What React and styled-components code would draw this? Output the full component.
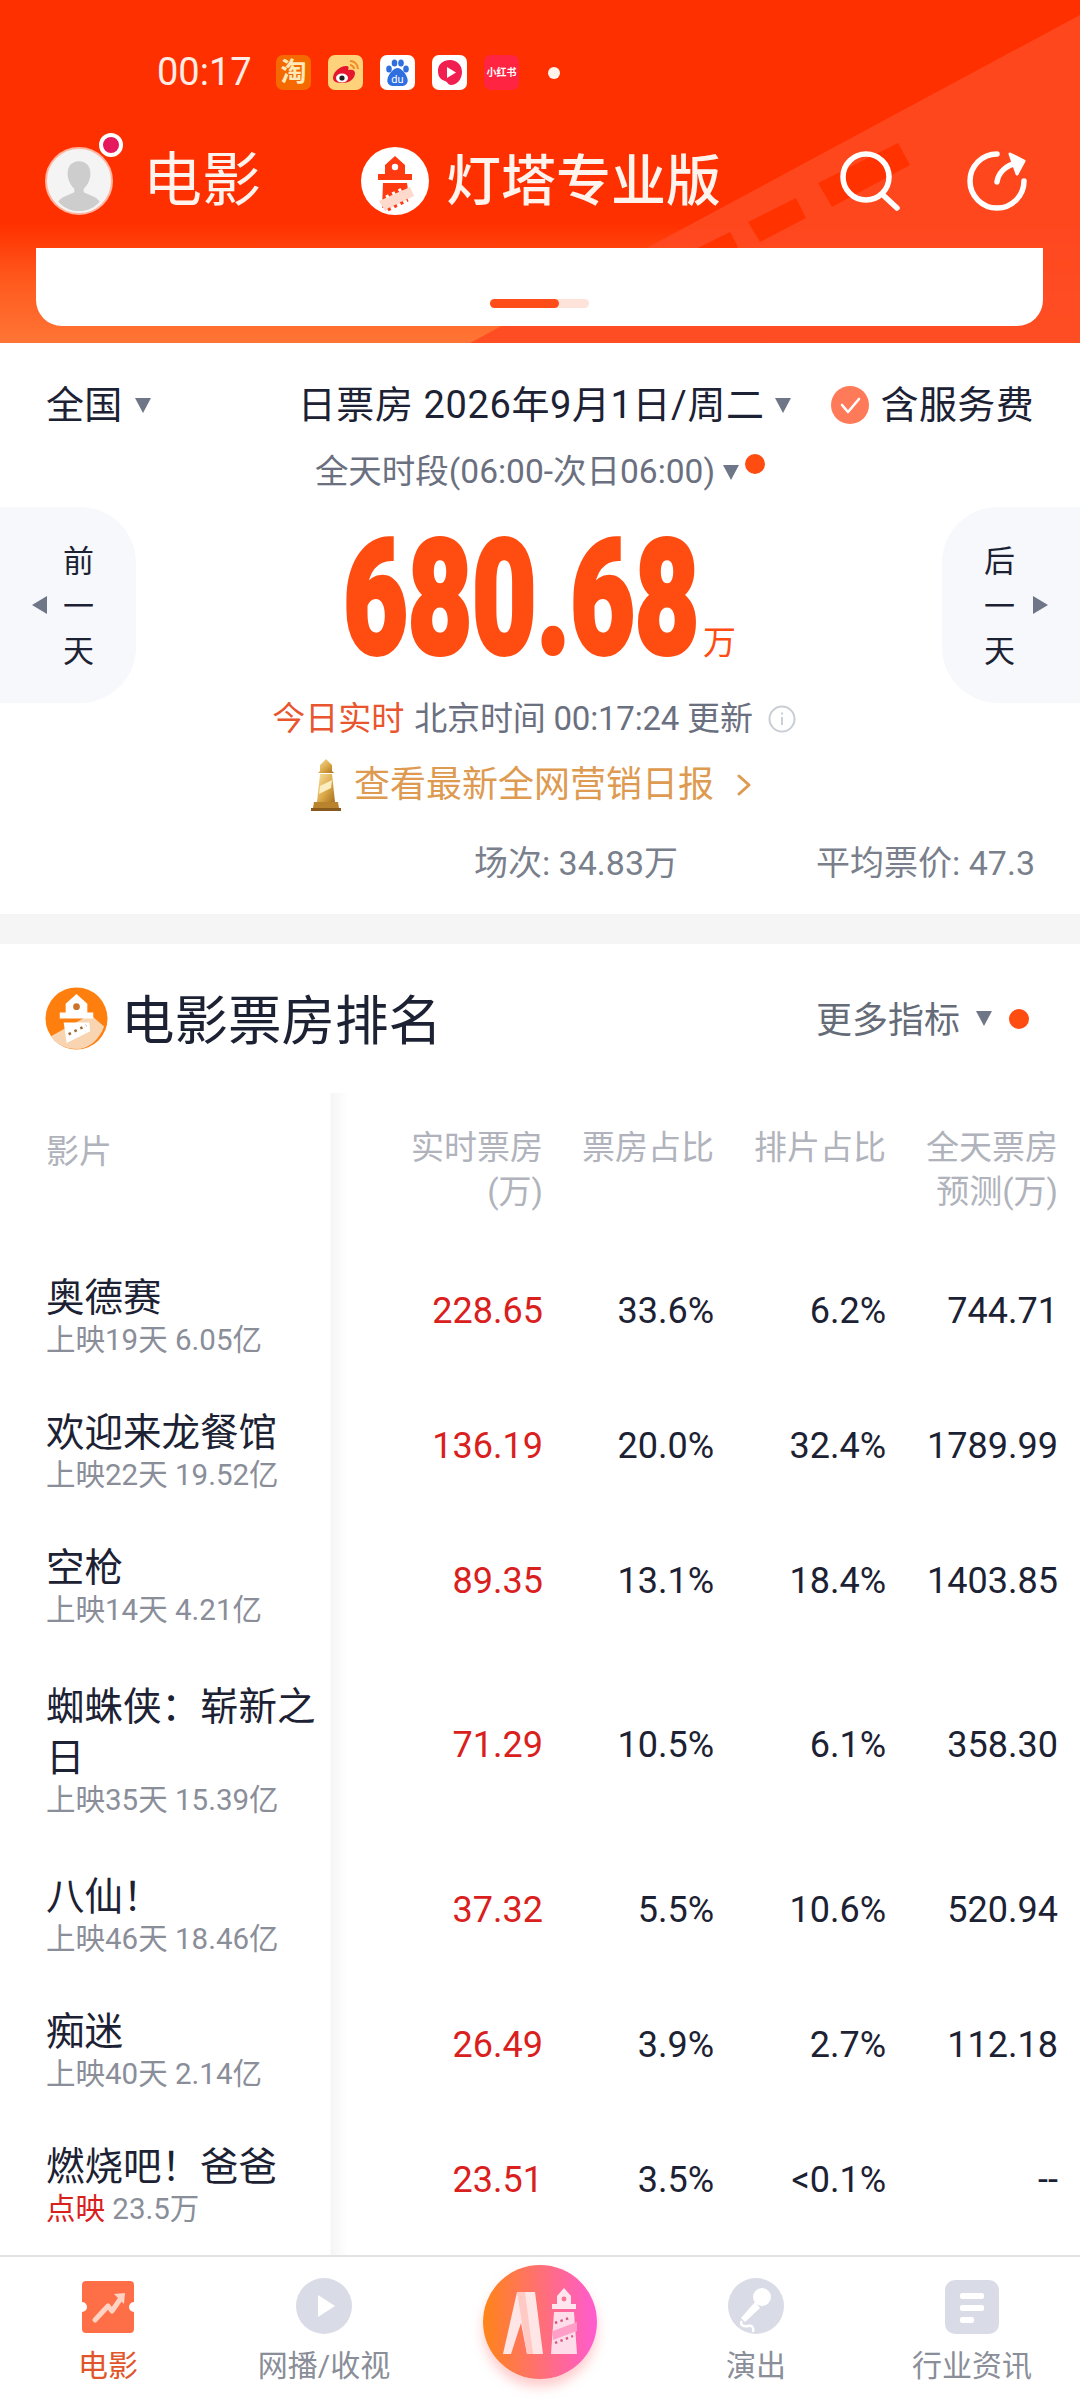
import styled, { createGlobalStyle } from "styled-components";

const FONT = `Roboto, "Noto Sans CJK SC", sans-serif`;

const GlobalStyle = createGlobalStyle`
  html, body {
    margin: 0;
    padding: 0;
    background: #fff;
  }
  body {
    font-family: ${FONT};
    color: #1c2233;
  }
`;

const movies = [
  { name: "奥德赛", sub: "上映19天 6.05亿", values: ["228.65", "33.6%", "6.2%", "744.71"] },
  { name: "欢迎来龙餐馆", sub: "上映22天 19.52亿", values: ["136.19", "20.0%", "32.4%", "1789.99"] },
  { name: "空枪", sub: "上映14天 4.21亿", values: ["89.35", "13.1%", "18.4%", "1403.85"] },
  { name: "蜘蛛侠\uFF1A崭新之日", tall: true, sub: "上映35天 15.39亿", values: ["71.29", "10.5%", "6.1%", "358.30"] },
  { name: "八仙\uFF01", sub: "上映46天 18.46亿", values: ["37.32", "5.5%", "10.6%", "520.94"] },
  { name: "痴迷", sub: "上映40天 2.14亿", values: ["26.49", "3.9%", "2.7%", "112.18"] },
  { name: "燃烧吧\uFF01爸爸", hot: "点映", sub: "23.5万", values: ["23.51", "3.5%", "<0.1%", "--"] },
];

const App = () => {
  return (
    <Page lang="zh-CN">
      <GlobalStyle />
      <Header>
        <HeaderDecor viewBox="0 0 1080 343" aria-hidden="true">
          <polygon points="1080,15 1080,343 470,343" fill="#ff4a22" />
          <polygon points="818,183 898,143 910,165 832,207" fill="#ff3300" />
          <polygon points="748,222 796,198 806,218 760,242" fill="#ff3300" />
          <polygon points="690,252 730,232 738,247 700,268" fill="#ff3300" />
        </HeaderDecor>
        <StatusBar>
          <StatusTime>00:17</StatusTime>
          <AppIcons>
            <TaoIcon>淘</TaoIcon>
            <AppIcon $bg="#fdd27a">
              <svg viewBox="0 0 35 35" width="35" height="35">
                <path d="M5 23c0-6 7-12 13-12 3 0 3 2 2 4 4-1 7 0 7 3 0 6-6 10-12 10S5 27 5 23z" fill="#e6162d" />
                <ellipse cx="14" cy="23" rx="6" ry="4.5" fill="#fff" />
                <circle cx="14" cy="23" r="2.6" fill="#222" />
                <path d="M22 6c4 0 8 3 8 8M22 10c2 0 4 2 4 4" stroke="#f08a24" strokeWidth="2" fill="none" />
              </svg>
            </AppIcon>
            <AppIcon $bg="#fff">
              <svg viewBox="0 0 35 35" width="35" height="35">
                <ellipse cx="9" cy="14" rx="2.8" ry="3.6" fill="#2f6fe0" />
                <ellipse cx="14.5" cy="8" rx="2.8" ry="3.6" fill="#2f6fe0" />
                <ellipse cx="21" cy="8" rx="2.8" ry="3.6" fill="#2f6fe0" />
                <ellipse cx="26" cy="14" rx="2.8" ry="3.6" fill="#2f6fe0" />
                <path d="M17.5 13c-4 0-9 6-10 11-1 4 2 7 5 7h10c3 0 6-3 5-7-1-5-6-11-10-11z" fill="#2f6fe0" />
                <text x="17.5" y="28" fontSize="11" fill="#fff" textAnchor="middle" fontFamily="Roboto">du</text>
              </svg>
            </AppIcon>
            <AppIcon $bg="#fff">
              <svg viewBox="0 0 35 35" width="35" height="35">
                <path d="M6 16C6 9 11 5 18 5s12 5 12 12-5 13-11 13c-3 0-3-3-6-4-3-1-7-3-7-10z" fill="#f01f4f" />
                <path d="M15 12l9 5.5-9 5.5z" fill="#fff" />
              </svg>
            </AppIcon>
            <RedNoteIcon>小红书</RedNoteIcon>
            <StatusDot />
          </AppIcons>
        </StatusBar>

        <NavBar>
          <NavLeft>
            <Avatar>
              <svg viewBox="0 0 68 68" width="64" height="64">
                <path d="M34 13c9 0 13 7 12 16-1 6-4 11-7 13v4c6 3 14 5 17 10-5 6-13 10-22 10s-17-4-22-10c3-5 11-7 17-10v-4c-3-2-6-7-7-13-1-9 3-16 12-16z" fill="#cdcdcd" />
              </svg>
              <AvatarBadge />
            </Avatar>
            <NavTitle>电影</NavTitle>
          </NavLeft>
          <NavBrand>
            <svg viewBox="0 0 70 70" width="70" height="70">
              <circle cx="35" cy="35" r="34" fill="#fff" />
              <path d="M35 10l10 9v9h7v6H18v-6h7v-9z" fill="#ff3a10" />
              <circle cx="35" cy="21" r="3.2" fill="#fff" />
              <path d="M23 37h24l2 14-27 11z" fill="#ff3a10" />
              <path d="M19 55l31-14 4 9-29 15z" fill="#ffd9cc" />
              <path d="M26 51l16-8" stroke="#fff" strokeWidth="3" strokeDasharray="3 4" />
              <path d="M28 64l20-10" stroke="#ff3a10" strokeWidth="3" strokeDasharray="3 4" />
            </svg>
            <BrandName>灯塔专业版</BrandName>
          </NavBrand>
          <NavActions>
            <svg viewBox="0 0 62 62" width="62" height="62" fill="none" stroke="#fff" strokeWidth="5.5" strokeLinecap="round">
              <circle cx="27" cy="27" r="23" />
              <path d="M44 45l14 13" />
            </svg>
            <svg viewBox="0 0 62 62" width="62" height="62" fill="none" stroke="#fff" strokeWidth="5.5" strokeLinecap="round" strokeLinejoin="round">
              <path d="M31 4A27 27 0 1 0 58 31" />
              <path d="M31 32c1-9 9-17 20-19" />
              <path d="M44 4l14 7-7 13z" fill="#fff" strokeWidth="3" />
            </svg>
          </NavActions>
        </NavBar>

        <BannerCard>
          <BannerPager>
            <BannerPagerFill />
          </BannerPager>
        </BannerCard>
      </Header>

      <Summary>
        <FilterRow>
          <FilterGroup>
            <FilterText>全国</FilterText>
            <Caret />
          </FilterGroup>
          <DateGroup>
            <DateText>日票房 2026年9月1日/周二</DateText>
            <Caret />
          </DateGroup>
          <FeeGroup>
            <CheckCircle>
              <svg viewBox="0 0 38 38" width="38" height="38" fill="none" stroke="#fff" strokeWidth="2.6" strokeLinecap="round" strokeLinejoin="round">
                <path d="M11 19l6 7 11-13" />
              </svg>
            </CheckCircle>
            <FilterText>含服务费</FilterText>
          </FeeGroup>
        </FilterRow>

        <PeriodRow>
          <PeriodText>全天时段(06:00-次日06:00)</PeriodText>
          <Caret />
          <PeriodDot />
        </PeriodRow>

        <HeroRow>
          <DayPanel $side="left">
            <SmallArrow $dir="left" />
            <DayChars>
              <span>前</span>
              <span>一</span>
              <span>天</span>
            </DayChars>
          </DayPanel>
          <HeroCenter>
            <BigBox>
              <BigNumber>680.68</BigNumber>
            </BigBox>
            <BigUnit>万</BigUnit>
          </HeroCenter>
          <DayPanel $side="right">
            <DayChars>
              <span>后</span>
              <span>一</span>
              <span>天</span>
            </DayChars>
            <SmallArrow $dir="right" />
          </DayPanel>
        </HeroRow>

        <RealtimeRow>
          <RealtimeTag>今日实时</RealtimeTag>
          <RealtimeText>北京时间 00:17:24 更新</RealtimeText>
          <InfoIcon>
            <svg viewBox="0 0 28 28" width="28" height="28" fill="none" stroke="#c9cdd4" strokeWidth="2">
              <circle cx="14" cy="14" r="12.5" />
              <path d="M14 12v8" />
              <path d="M14 7.5v2" />
            </svg>
          </InfoIcon>
        </RealtimeRow>

        <ReportRow>
          <svg viewBox="0 0 30 52" width="30" height="52">
            <defs>
              <linearGradient id="gold" x1="0" y1="0" x2="1" y2="1">
                <stop offset="0" stopColor="#f8e2a0" />
                <stop offset="0.55" stopColor="#dba94a" />
                <stop offset="1" stopColor="#a8701f" />
              </linearGradient>
            </defs>
            <path d="M15 0l6 6v6l2 2H7l2-2V6z" fill="url(#gold)" />
            <path d="M9 15h12l3 28H6z" fill="url(#gold)" />
            <path d="M9 27l12-6-1 8-12 6z" fill="#fbedc0" />
            <path d="M3 43h24l1 6H2z" fill="#b9822d" />
            <path d="M0 49h30v3H0z" fill="#8a5a1c" />
          </svg>
          <ReportText>查看最新全网营销日报</ReportText>
          <svg viewBox="0 0 14 22" width="14" height="22" fill="none" stroke="#dd9a50" strokeWidth="3" strokeLinecap="round" strokeLinejoin="round">
            <path d="M2 2l10 9-10 9" />
          </svg>
        </ReportRow>

        <StatsRow>
          <StatText>场次: 34.83万</StatText>
          <StatText>平均票价: 47.3</StatText>
        </StatsRow>
      </Summary>

      <GrayBand />

      <Ranking>
        <RankingHead>
          <RankingTitle>
            <svg viewBox="0 0 64 64" width="63" height="63">
              <circle cx="32" cy="32" r="31.5" fill="#ff7f0e" />
              <path d="M6 50l40-22 14 12C55 54 44 63 32 63 21 63 11 58 6 50z" fill="#f8d4b0" />
              <path d="M32 7l11 10v9h6v6H15v-6h6v-9z" fill="#fff" />
              <circle cx="32" cy="20" r="3.4" fill="#c9742a" />
              <path d="M19 36h26l1 9-24 12z" fill="#fff" />
              <path d="M24 48l18-9" stroke="#a06a30" strokeWidth="2.6" strokeDasharray="2.6 4" />
            </svg>
            <RankingName>电影票房排名</RankingName>
          </RankingTitle>
          <MoreMetrics>
            <MoreText>更多指标</MoreText>
            <Caret />
            <MoreDot />
          </MoreMetrics>
        </RankingHead>

        <Table>
          <TableHeadRow>
            <NameCell>
              <HeadName>影片</HeadName>
            </NameCell>
            <HeadCell>实时票房<br />(万)</HeadCell>
            <HeadCell>票房占比</HeadCell>
            <HeadCell>排片占比</HeadCell>
            <HeadCell>全天票房<br />预测(万)</HeadCell>
          </TableHeadRow>
          {movies.map((movie) => (
            <MovieRow key={movie.name} $tall={movie.tall}>
              <MovieNameCell>
                <MovieName>{movie.name}</MovieName>
                <MovieSub>
                  {movie.hot && <HotTag>{movie.hot} </HotTag>}
                  {movie.sub}
                </MovieSub>
              </MovieNameCell>
              {movie.values.map((value, i) => (
                <ValueCell key={i} $primary={i === 0}>{value}</ValueCell>
              ))}
            </MovieRow>
          ))}
          <TableTail>
            <NameCell />
          </TableTail>
        </Table>
      </Ranking>

      <TabBar>
        <Tab>
          <TabIcon>
            <svg viewBox="0 0 54 54" width="54" height="54">
              <path d="M5 1h44a4 4 0 0 1 4 4v17a5 5 0 0 0 0 10v17a4 4 0 0 1-4 4H5a4 4 0 0 1-4-4V32a5 5 0 0 0 0-10V5a4 4 0 0 1 4-4z" fill="#ff6f47" />
              <path d="M14 40l13-14 4 5 9-13" stroke="#ffd3c4" strokeWidth="5" fill="none" strokeLinecap="round" strokeLinejoin="round" />
              <path d="M33 14l11-1-1 11z" fill="#ffd3c4" />
            </svg>
          </TabIcon>
          <TabLabel $active>电影</TabLabel>
        </Tab>
        <Tab>
          <TabIcon>
            <svg viewBox="0 0 56 56" width="56" height="56">
              <circle cx="28" cy="28" r="28" fill="#d9dce6" />
              <path d="M22 17l17 11-17 11z" fill="#fff" strokeLinejoin="round" />
            </svg>
          </TabIcon>
          <TabLabel>网播/收视</TabLabel>
        </Tab>
        <Tab>
          <AiButton>
            <svg viewBox="0 0 114 114" width="114" height="114">
              <polygon points="34,27 52,27 60,89 44,89 38,58 28,89 20,89" fill="#ffe6e6" />
              <polygon points="34,27 42,27 50,89 44,89" fill="#ffc9c4" />
              <path d="M81 23l7 8v8h5v5H69v-5h5v-8z" fill="#ffe6ee" />
              <circle cx="81" cy="34" r="2.4" fill="#ff6f8f" />
              <path d="M71 47h20l3 42H68z" fill="#ffdcea" />
              <path d="M70 66l24-9v9l-24 9z" fill="#ff9fc8" />
              <path d="M72 58l14-5M72 78l18-7" stroke="#d9577f" strokeWidth="2.4" strokeDasharray="2.4 3.4" />
            </svg>
          </AiButton>
        </Tab>
        <Tab>
          <TabIcon>
            <svg viewBox="0 0 56 56" width="56" height="56">
              <circle cx="28" cy="28" r="28" fill="#d9dce6" />
              <circle cx="34" cy="19" r="9" fill="#fff" />
              <path d="M27 24l5 6-15 14-4-4z" fill="#fff" />
              <path d="M14 43c-3 4 2 6 6 5s6 1 5 6" stroke="#fff" strokeWidth="2.4" fill="none" />
            </svg>
          </TabIcon>
          <TabLabel>演出</TabLabel>
        </Tab>
        <Tab>
          <TabIcon>
            <svg viewBox="0 0 54 54" width="54" height="54">
              <rect width="54" height="54" rx="10" fill="#d9dce6" />
              <rect x="15" y="13" width="24" height="6" rx="2" fill="#fff" />
              <rect x="15" y="25" width="24" height="6" rx="2" fill="#fff" />
              <rect x="15" y="37" width="14" height="6" rx="2" fill="#fff" />
            </svg>
          </TabIcon>
          <TabLabel>行业资讯</TabLabel>
        </Tab>
      </TabBar>
    </Page>
  );
};
export default App;

const Page = styled.div`
  width: 1080px;
  height: 2400px;
  overflow: hidden;
  background: #fff;
  display: flex;
  flex-direction: column;
`;

/* top red area */
const Header = styled.header`
  position: relative;
  height: 343px;
  flex-shrink: 0;
  overflow: hidden;
  background: linear-gradient(180deg, #ff3000 0%, #ff3000 65%, #ff5a1e 82%, #ff7535 100%);
`;
const HeaderDecor = styled.svg`
  position: absolute;
  inset: 0;
  width: 1080px;
  height: 343px;
  opacity: 0.9;
`;
const StatusBar = styled.div`
  position: relative;
  display: flex;
  align-items: center;
  height: 35px;
  padding: 55px 0 0 157px;
`;
const StatusTime = styled.span`
  width: 119px;
  font-size: 38px;
  line-height: 35px;
  color: #ffece4;
`;
const AppIcons = styled.div`
  display: flex;
  align-items: center;
  gap: 17px;
`;
const AppIcon = styled.span`
  display: flex;
  width: 35px;
  height: 35px;
  border-radius: 7px;
  overflow: hidden;
  background: ${(props) => props.$bg};
`;
const TaoIcon = styled.span`
  display: flex;
  align-items: center;
  justify-content: center;
  width: 35px;
  height: 35px;
  border-radius: 7px;
  background: #f56a00;
  color: #ffe9b8;
  font-size: 26px;
  font-weight: 700;
  line-height: 35px;
`;
const RedNoteIcon = styled.span`
  display: flex;
  align-items: center;
  justify-content: center;
  width: 35px;
  height: 35px;
  border-radius: 7px;
  background: #ff2442;
  color: #fff;
  font-size: 10px;
  font-weight: 700;
  white-space: nowrap;
  line-height: 35px;
`;
const StatusDot = styled.span`
  width: 12px;
  height: 12px;
  margin-left: 12px;
  border-radius: 50%;
  background: #fff3ee;
`;
const NavBar = styled.div`
  position: relative;
  display: flex;
  align-items: center;
  height: 70px;
  margin-top: 56px;
  padding: 0 52px 0 45px;
`;
const NavLeft = styled.div`
  display: flex;
  align-items: center;
  gap: 30px;
  width: 315px;
`;
const Avatar = styled.div`
  position: relative;
  display: flex;
  align-items: center;
  justify-content: center;
  width: 64px;
  height: 64px;
  border: 2px solid #ffb59f;
  border-radius: 50%;
  background: #f4f4f4;
  svg {
    border-radius: 50%;
  }
`;
const AvatarBadge = styled.span`
  position: absolute;
  top: -16px;
  right: -12px;
  width: 16px;
  height: 16px;
  border: 4px solid #fff;
  border-radius: 50%;
  background: #e6195f;
`;
const NavTitle = styled.div`
  font-size: 59px;
  line-height: 70px;
  color: #fff3ee;
`;
const NavBrand = styled.div`
  display: flex;
  align-items: center;
  gap: 16px;
`;
const BrandName = styled.div`
  font-size: 55px;
  line-height: 70px;
  font-weight: 500;
  color: #fff3ee;
`;
const NavActions = styled.div`
  display: flex;
  align-items: center;
  gap: 68px;
  margin-left: auto;
  svg:first-child {
    margin-right: -3px;
  }
`;
const BannerCard = styled.div`
  position: relative;
  display: flex;
  justify-content: center;
  box-sizing: border-box;
  height: 78px;
  margin: 32px 37px 0 36px;
  padding-top: 51px;
  background: #fff;
  border-radius: 0 0 26px 26px;
`;
const BannerPager = styled.div`
  width: 99px;
  height: 9px;
  border-radius: 5px;
  background: #fde3da;
`;
const BannerPagerFill = styled.div`
  width: 69px;
  height: 9px;
  border-radius: 5px;
  background: #ff4d1a;
`;

/* summary */
const Summary = styled.section`
  flex-shrink: 0;
  padding: 31px 0;
  background: #fff;
`;
const FilterRow = styled.div`
  display: flex;
  align-items: center;
  height: 60px;
  padding: 2px 46px 0;
  box-sizing: border-box;
`;
const FilterGroup = styled.div`
  display: flex;
  align-items: center;
  gap: 12px;
`;
const DateGroup = styled(FilterGroup)`
  margin-left: auto;
  gap: 10px;
`;
const FeeGroup = styled(FilterGroup)`
  margin-left: 40px;
`;
const FilterText = styled.span`
  font-size: 38px;
  line-height: 58px;
  letter-spacing: 0.35px;
  color: #1c2233;
  white-space: nowrap;
`;
const DateText = styled(FilterText)`
  letter-spacing: 0.6px;
`;
const Caret = styled.span`
  width: 0;
  height: 0;
  border-left: 8px solid transparent;
  border-right: 8px solid transparent;
  border-top: 15px solid #6f7687;
`;
const CheckCircle = styled.span`
  display: flex;
  width: 38px;
  height: 38px;
  border-radius: 50%;
  background: #ff7a59;
`;
const PeriodRow = styled.div`
  position: relative;
  display: flex;
  align-items: center;
  justify-content: center;
  gap: 8px;
  height: 40px;
  margin-top: 18px;
`;
const PeriodText = styled.span`
  font-size: 33.5px;
  line-height: 40px;
  color: #6b7080;
`;
const PeriodDot = styled.span`
  width: 20px;
  height: 20px;
  margin: -16px 0 0 -2px;
  border-radius: 50%;
  background: #ff4d12;
`;
const HeroRow = styled.div`
  display: flex;
  align-items: center;
  justify-content: space-between;
  height: 196px;
  margin-top: 15px;
`;
const DayPanel = styled.div`
  display: flex;
  align-items: center;
  justify-content: center;
  gap: ${(props) => (props.$side === "left" ? "16px" : "18px")};
  box-sizing: border-box;
  width: ${(props) => (props.$side === "left" ? "136px" : "138px")};
  height: 196px;
  padding: ${(props) => (props.$side === "left" ? "0 10px 0 0" : "0 0 0 10px")};
  background: #f6f8fb;
  border-radius: ${(props) => (props.$side === "left" ? "0 56px 56px 0" : "56px 0 0 56px")};
`;
const SmallArrow = styled.span`
  width: 0;
  height: 0;
  border-top: 9px solid transparent;
  border-bottom: 9px solid transparent;
  ${(props) =>
    props.$dir === "left"
      ? "border-right: 15px solid #6f7687;"
      : "border-left: 15px solid #6f7687;"}
`;
const DayChars = styled.div`
  display: flex;
  flex-direction: column;
  align-items: center;
  padding-top: 3px;
  font-size: 31px;
  line-height: 45px;
  color: #1c2233;
`;
const HeroCenter = styled.div`
  display: flex;
  align-items: flex-end;
  gap: 4px;
  height: 121px;
  margin: 0 0 14px 8px;
`;
const BigBox = styled.div`
  display: flex;
  justify-content: flex-end;
  width: 349px;
  height: 120px;
`;
const BigNumber = styled.div`
  flex-shrink: 0;
  font-size: 160px;
  line-height: 120px;
  font-weight: 900;
  color: #ff4d12;
  -webkit-text-stroke: 4px #ff4d12;
  transform: scaleX(0.695);
  transform-origin: right center;
`;
const BigUnit = styled.span`
  margin-bottom: -2px;
  font-size: 33px;
  line-height: 36px;
  color: #ff4d12;
`;
const RealtimeRow = styled.div`
  display: flex;
  align-items: center;
  justify-content: center;
  gap: 10px;
  height: 34px;
  padding-right: 12px;
  margin-top: -1px;
`;
const RealtimeTag = styled.span`
  font-size: 33px;
  line-height: 34px;
  color: #e8552e;
`;
const RealtimeText = styled.span`
  font-size: 33px;
  line-height: 34px;
  letter-spacing: -0.2px;
  color: #6b7080;
`;
const InfoIcon = styled.span`
  display: flex;
  margin-left: 5px;
`;
const ReportRow = styled.div`
  display: flex;
  align-items: center;
  justify-content: center;
  height: 52px;
  margin-top: 23px;
  padding-right: 18px;
  svg:last-child {
    margin-left: 23px;
  }
`;
const ReportText = styled.span`
  margin-left: 13px;
  font-size: 36px;
  line-height: 52px;
  color: #dd9a50;
`;
const StatsRow = styled.div`
  display: flex;
  justify-content: flex-end;
  gap: 138px;
  height: 40px;
  margin-top: 32px;
  padding-right: 45px;
`;
const StatText = styled.span`
  font-size: 34px;
  line-height: 40px;
  color: #7a7f8c;
`;
const GrayBand = styled.div`
  flex-shrink: 0;
  height: 30px;
  background: #f5f5f5;
`;

/* ranking table */
const Ranking = styled.section`
  flex: 1;
  min-height: 0;
  padding-top: 43px;
`;
const RankingHead = styled.div`
  display: flex;
  align-items: center;
  justify-content: space-between;
  height: 63px;
  padding: 0 51px 0 45px;
`;
const RankingTitle = styled.div`
  display: flex;
  align-items: center;
  gap: 13px;
`;
const RankingName = styled.h2`
  margin: 0;
  padding-top: 6px;
  font-size: 53.5px;
  line-height: 57px;
  font-weight: 400;
  color: #1c2233;
`;
const MoreMetrics = styled.div`
  display: flex;
  align-items: center;
  gap: 16px;
`;
const MoreText = styled.span`
  padding-top: 5px;
  font-size: 36px;
  line-height: 58px;
  color: #666b78;
`;
const MoreDot = styled.span`
  width: 20px;
  height: 20px;
  margin-left: 1px;
  border-radius: 50%;
  background: #ff4d12;
`;
const Table = styled.div`
  margin-top: 43px;
`;
const COLUMNS = "349px 194px 171px 172px 172px";
const TableHeadRow = styled.div`
  display: grid;
  grid-template-columns: ${COLUMNS};
  height: 150px;
`;
const NameCell = styled.div`
  box-sizing: border-box;
  height: 100%;
  display: flex;
  flex-direction: column;
  justify-content: center;
  padding: 0 20px 0 46px;
  background: linear-gradient(90deg, #fff 0, #f5f5f5 1px, #fff) 330px 0 / 18px 100% no-repeat;
`;
const MovieNameCell = styled(NameCell)`
  padding-top: 8px;
`;
const HeadName = styled.span`
  margin-bottom: 32px;
  font-size: 33px;
  line-height: 44px;
  color: #b0b3bb;
`;
const HeadCell = styled.div`
  padding-top: 33px;
  font-size: 33px;
  line-height: 44px;
  text-align: right;
  color: #b0b3bb;
  white-space: nowrap;
`;
const MovieRow = styled.div`
  display: grid;
  grid-template-columns: ${COLUMNS};
  height: ${(props) => (props.$tall ? "194px" : "135px")};
`;
const MovieName = styled.div`
  font-size: 38.5px;
  line-height: 51px;
  color: #1c2233;
`;
const MovieSub = styled.div`
  font-size: 29.5px;
  line-height: 34px;
  color: #8a8e99;
  white-space: nowrap;
`;
const HotTag = styled.span`
  color: #d9201c;
`;
const ValueCell = styled.div`
  align-self: center;
  font-size: 36px;
  line-height: 48px;
  text-align: right;
  white-space: nowrap;
  color: ${(props) => (props.$primary ? "#d9201c" : "#1c2233")};
`;
const TableTail = styled.div`
  display: grid;
  grid-template-columns: ${COLUMNS};
  height: 8px;
`;

/* bottom tabs */
const TabBar = styled.nav`
  flex-shrink: 0;
  display: grid;
  grid-template-columns: repeat(5, 216px);
  box-sizing: border-box;
  height: 145px;
  border-top: 2px solid #e3e3e3;
  background: #fff;
`;
const Tab = styled.div`
  display: flex;
  flex-direction: column;
  align-items: center;
  padding-top: 20px;
`;
const TabIcon = styled.div`
  display: flex;
  align-items: flex-end;
  justify-content: center;
  height: 57px;
`;
const TabLabel = styled.span`
  margin-top: 12px;
  font-size: 30px;
  line-height: 40px;
  white-space: nowrap;
  color: ${(props) => (props.$active ? "#e0552a" : "#8a8e99")};
`;
const AiButton = styled.div`
  width: 114px;
  height: 114px;
  margin-top: -12px;
  border-radius: 50%;
  background: linear-gradient(90deg, #ff8418, #ff5bd0);
  box-shadow: 0 8px 12px rgba(255, 110, 110, 0.35);
`;
